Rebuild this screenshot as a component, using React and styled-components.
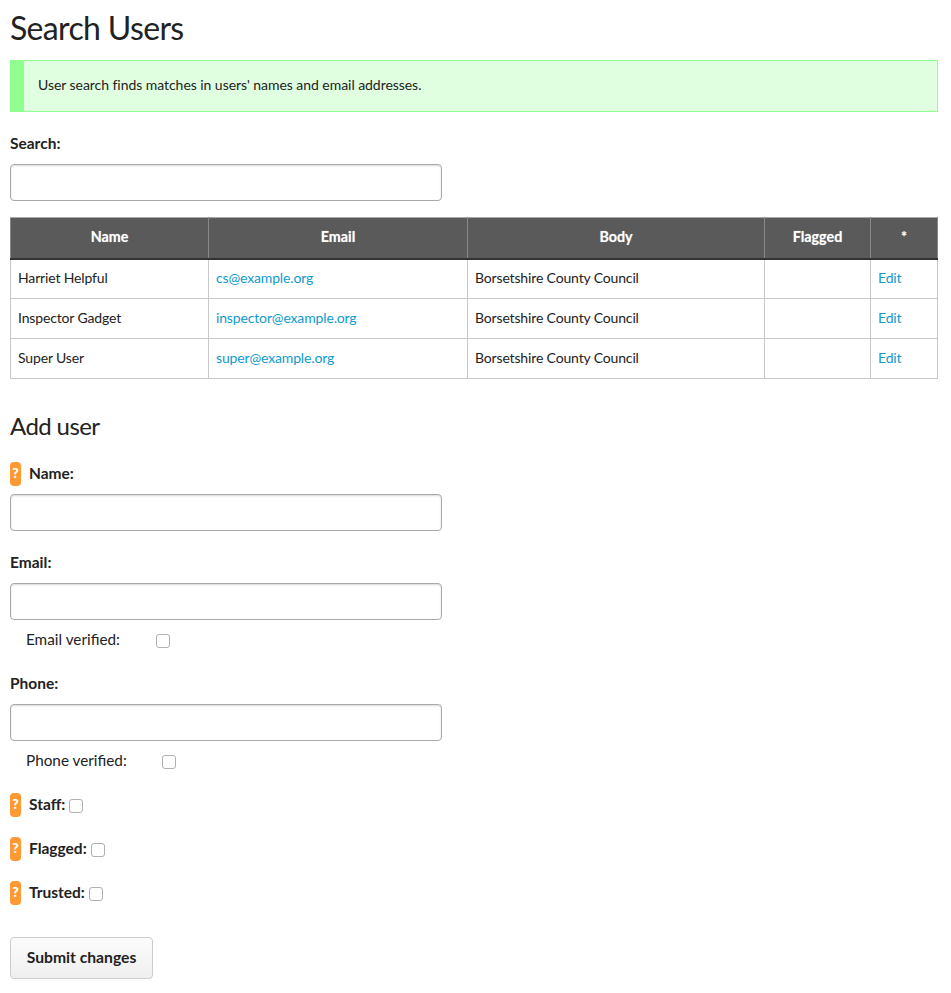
import React from "react";
import styled, { createGlobalStyle } from "styled-components";

const Global = createGlobalStyle`
  html, body { margin: 0; padding: 0; background: #fff; }
  body { font-family: Lato, "Open Sans", Arial, sans-serif; font-size: 14px; color: #222; }
`;

const Page = styled.div`
  width: 928px;
  height: 993px;
  padding: 0 13px 0 10px;
  overflow: hidden;
`;
const Title = styled.h1`
  margin: 0;
  height: 60px;
  padding-top: 8px;
  box-sizing: border-box;
  font-size: 32px;
  line-height: 40px;
  font-weight: 400;
  color: #222;
  letter-spacing: -0.65px;
`;
const Notice = styled.div`
  box-sizing: border-box;
  height: 52px;
  display: flex;
  align-items: center;
  padding: 0 0 3px 14px;
  background: #e0ffe0;
  border: 1px solid #90ff90;
  border-left-width: 14px;
  font-size: 14px;
  letter-spacing: -0.05px;
  color: #222;
`;
const Field = styled.div`
  height: ${(p) => p.$h}px;
  padding-top: ${(p) => p.$pt || 0}px;
  box-sizing: border-box;
`;
const Label = styled.label`
  display: block;
  font-weight: 700;
  font-size: 15.5px;
  line-height: 20px;
  color: #222;
`;
const TextInput = styled.input`
  display: block;
  box-sizing: border-box;
  width: 432px;
  height: 37px;
  margin: ${(p) => p.$mt}px 0 0;
  border: 1px solid #aaa;
  border-radius: 4px;
  box-shadow: inset 0 1px 2px rgba(0, 0, 0, 0.15);
  background: #fff;
`;
const Table = styled.table`
  width: 927px;
  border-collapse: collapse;
  table-layout: fixed;
  font-size: 14px;
  letter-spacing: -0.15px;
`;
const Th = styled.th`
  height: 41px;
  padding: 0 8px 2px;
  box-sizing: border-box;
  background: #5a5a5a;
  color: #fff;
  font-weight: 700;
  font-size: 14.3px;
  letter-spacing: 0;
  text-shadow: 0 0 1px rgba(255, 255, 255, 0.5);
  text-align: center;
  border: 1px solid #888;
  border-bottom: 2px solid #333;
  border-top-color: #aaa;
`;
const Td = styled.td`
  height: 40px;
  padding: 0 7px 2px;
  box-sizing: border-box;
  border: 1px solid #c8c8c8;
  color: #222;
`;
const Link = styled.a`
  color: #0f9bce;
  text-decoration: none;
`;
const SubTitle = styled.h2`
  margin: 0;
  height: 83px;
  padding-top: 31px;
  box-sizing: border-box;
  font-size: 24px;
  line-height: 32px;
  font-weight: 400;
  letter-spacing: -0.6px;
  color: #222;
`;
const TagRow = styled.div`
  display: flex;
  align-items: center;
  height: 24px;
`;
const TagLabel = styled(Label)`
  margin-top: -2px;
`;
const HelpTag = styled.span`
  width: 11px;
  height: 24px;
  border-radius: 4px;
  background: #ff9933;
  color: #fff;
  font-weight: 900;
  font-size: 14px;
  line-height: 22px;
  text-align: center;
  margin-right: 8px;
  flex: none;
`;
const CheckBox = styled.input.attrs({ type: "checkbox" })`
  appearance: none;
  box-sizing: border-box;
  width: 14px;
  height: 14px;
  margin: 0;
  border: 1px solid #b0b0b0;
  border-radius: 3px;
  background: #fff;
  flex: none;
`;
const TagCheck = styled(CheckBox)`
  margin-left: 4px;
  margin-top: 2px;
`;
const Verified = styled.div`
  display: flex;
  align-items: center;
  height: 20px;
  padding-left: 16px;
  margin-top: 9px;
  font-size: 15.3px;
  color: #222;
`;
const VerifiedBox = styled(CheckBox)`
  margin-left: ${(p) => p.$gap}px;
  margin-top: 4px;
`;
const Submit = styled.button`
  display: block;
  box-sizing: border-box;
  width: 143px;
  height: 42px;
  padding: 0 0 2px;
  border: 1px solid #ccc;
  border-radius: 4px;
  background: linear-gradient(#fcfcfc, #efefef);
  font-family: inherit;
  font-size: 15.7px;
  font-weight: 700;
  color: #222;
`;

const users = [
  ["Harriet Helpful", "cs@example.org"],
  ["Inspector Gadget", "inspector@example.org"],
  ["Super User", "super@example.org"],
];
const cols = [198, 259, 297, 106, 67];

function TagField({ label, h }) {
  return (
    <Field $h={h}>
      <TagRow>
        <HelpTag>?</HelpTag>
        <TagLabel>{label}</TagLabel>
        <TagCheck />
      </TagRow>
    </Field>
  );
}

function InputField({ label, verified, gap, h }) {
  return (
    <Field $h={h}>
      <Label>{label}</Label>
      <TextInput $mt={11} />
      <Verified>
        {verified}
        <VerifiedBox $gap={gap} />
      </Verified>
    </Field>
  );
}

export default function App() {
  return (
    <Page>
      <Global />
      <Title>Search Users</Title>
      <Notice>User search finds matches in users' names and email addresses.</Notice>
      <Field $h={105} $pt={21}>
        <Label>Search:</Label>
        <TextInput $mt={11} />
      </Field>
      <Table>
        <colgroup>
          {cols.map((w, i) => (
            <col key={i} width={w} />
          ))}
        </colgroup>
        <thead>
          <tr>
            {["Name", "Email", "Body", "Flagged", "*"].map((h) => (
              <Th key={h}>{h}</Th>
            ))}
          </tr>
        </thead>
        <tbody>
          {users.map(([n, e]) => (
            <tr key={e}>
              <Td>{n}</Td>
              <Td>
                <Link href="#">{e}</Link>
              </Td>
              <Td>Borsetshire County Council</Td>
              <Td />
              <Td>
                <Link href="#">Edit</Link>
              </Td>
            </tr>
          ))}
        </tbody>
      </Table>
      <SubTitle>Add user</SubTitle>
      <Field $h={90}>
        <TagRow>
          <HelpTag>?</HelpTag>
          <TagLabel>Name:</TagLabel>
        </TagRow>
        <TextInput $mt={8} />
      </Field>
      <InputField label="Email:" verified="Email verified:" gap={36} h={121} />
      <InputField label="Phone:" verified="Phone verified:" gap={35} h={120} />
      <TagField label="Staff:" h={44} />
      <TagField label="Flagged:" h={44} />
      <TagField label="Trusted:" h={56} />
      <Submit>Submit changes</Submit>
    </Page>
  );
}
